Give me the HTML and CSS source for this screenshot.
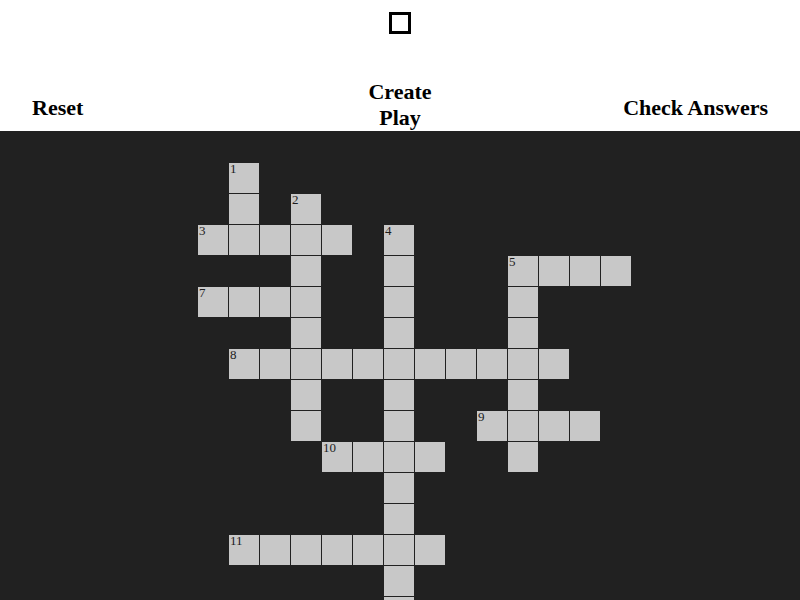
FILE: index.html
```html
<!DOCTYPE html>
<html lang="en">
<head>
    <meta charset="UTF-8">
    <meta name="viewport" content="width=device-width, initial-scale=1.0">
    <title>Crossword</title>
    <link rel="stylesheet" href="styles.css">
</head>
<body>
    <!-- Top bar -->
    <header class="top-bar">
        <div class="logo"></div>
        <nav class="toolbar">
            <div class="side side-left">
                <button class="tool-btn" id="reset">Reset</button>
            </div>
            <div class="mode-group">
                <button class="tool-btn">Create</button>
                <button class="tool-btn">Play</button>
            </div>
            <div class="side side-right">
                <button class="tool-btn" id="check">Check Answers</button>
            </div>
        </nav>
    </header>

    <!-- Puzzle board -->
    <main class="board-wrap">
        <div class="board" id="board"></div>
    </main>

    <script src="script.js"></script>
</body>
</html>
```

FILE: styles.css
```css
body {
    margin: 0;
    background-color: #212121;
    font-family: "Liberation Serif", "Times New Roman", serif;
}
.top-bar {
    background-color: #ffffff;
    padding-top: 12px;
}
.logo {
    width: 16px;
    height: 16px;
    margin: 0 auto;
    border: 3px solid #000000;
}
.toolbar {
    display: grid;
    grid-template-columns: 1fr auto 1fr;
    align-items: center;
    min-height: 53px;
    margin-top: 44px;
    padding: 0 32px;
}
.side {
    display: flex;
    margin-top: 6px;
}
.side-right {
    justify-content: flex-end;
}
.mode-group {
    display: flex;
    flex-direction: column;
    align-items: center;
}
.tool-btn {
    background: none;
    border: none;
    padding: 0;
    margin: 0;
    font-family: inherit;
    font-size: 22px;
    font-weight: bold;
    line-height: normal;
    color: #000000;
    cursor: pointer;
}
.board-wrap {
    padding: 32px 0 0 198px;
}
.board {
    display: grid;
    grid-template-columns: repeat(14, 30px);
    grid-auto-rows: 30px;
    gap: 1px;
}
.cell {
    background-color: #c8c8c8;
    color: #1c1c1c;
    font-size: 13px;
    line-height: 1;
    padding: 0 0 0 1px;
    margin: 0;
}
.cell span {
    display: block;
    margin-top: -1px;
}
```

FILE: script.js
```js
// word list: start row/col, direction and length
var words = [
    { n: 1, r: 0, c: 1, dir: "down", len: 3 },
    { n: 2, r: 1, c: 3, dir: "down", len: 8 },
    { n: 3, r: 2, c: 0, dir: "across", len: 5 },
    { n: 4, r: 2, c: 6, dir: "down", len: 14 },
    { n: 5, r: 3, c: 10, dir: "across", len: 4 },
    { n: 6, r: 3, c: 10, dir: "down", len: 7 },
    { n: 7, r: 4, c: 0, dir: "across", len: 4 },
    { n: 8, r: 6, c: 1, dir: "across", len: 11 },
    { n: 9, r: 8, c: 9, dir: "across", len: 4 },
    { n: 10, r: 9, c: 4, dir: "across", len: 4 },
    { n: 11, r: 12, c: 1, dir: "across", len: 7 }
];

var cells = {};
words.forEach(function (w) {
    for (var i = 0; i < w.len; i++) {
        var r = w.dir === "down" ? w.r + i : w.r;
        var c = w.dir === "across" ? w.c + i : w.c;
        var key = r + "," + c;
        if (!cells[key]) cells[key] = { r: r, c: c, num: null };
        if (i === 0 && !cells[key].num) cells[key].num = w.n;
    }
});

var board = document.getElementById("board");
Object.keys(cells).forEach(function (key) {
    var cell = cells[key];
    var el = document.createElement("div");
    el.className = "cell";
    el.style.gridRow = cell.r + 1;
    el.style.gridColumn = cell.c + 1;
    if (cell.num) {
        var label = document.createElement("span");
        label.textContent = cell.num;
        el.appendChild(label);
    }
    board.appendChild(el);
});
```
